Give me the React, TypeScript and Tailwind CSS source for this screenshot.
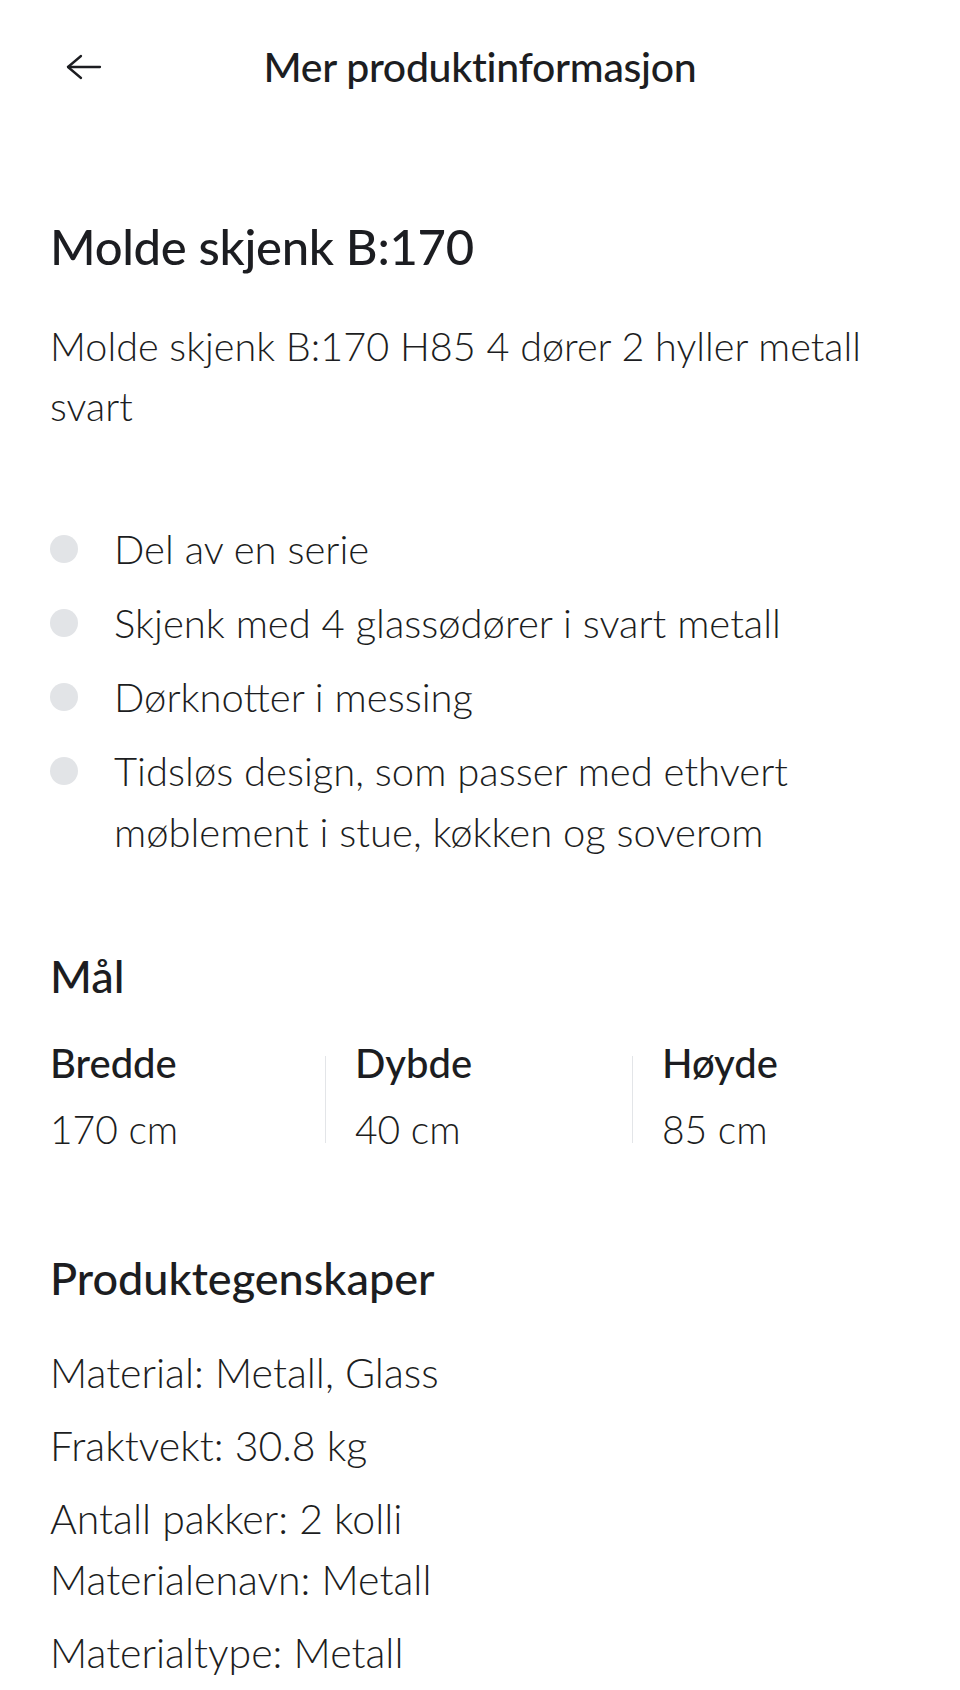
import React from 'react';

const bullets = [
  'Del av en serie',
  'Skjenk med 4 glassødører i svart metall',
  'Dørknotter i messing',
  'Tidsløs design, som passer med ethvert møblement i stue, køkken og soverom',
];

const dimensions = [
  { label: 'Bredde', value: '170 cm' },
  { label: 'Dybde', value: '40 cm' },
  { label: 'Høyde', value: '85 cm' },
];

const BackArrow: React.FC = () => (
  <svg width="36" height="26" viewBox="0 0 36 26" fill="none" stroke="currentColor" strokeWidth="2.3" strokeLinecap="round" strokeLinejoin="round">
    <path d="M34 13H2" />
    <path d="M15 2L2 13l13 11" />
  </svg>
);

const App: React.FC = () => {
  return (
    <div className="min-h-screen bg-white text-[#1c1d21] font-['Lato','Noto_Sans',sans-serif]">
      <header className="h-[134px] flex items-center px-[66px]">
        <button className="w-[36px] text-[#1c1d21]" aria-label="Tilbake">
          <BackArrow />
        </button>
        <h2 className="flex-1 text-center text-[41px] font-medium tracking-[-0.3px]">Mer produktinformasjon</h2>
        <div className="w-[36px]" />
      </header>

      <main className="px-[50px]">
        <h1 className="mt-[82px] text-[49px] leading-[60px] font-medium tracking-[-0.3px]">Molde skjenk B:170</h1>

        <p className="mt-[40px] text-[39.6px] leading-[60px] font-light">
          Molde skjenk B:170 H85 4 dører 2 hyller metall svart
        </p>

        <ul className="mt-[83px] flex flex-col gap-[13px]">
          {bullets.map((b) => (
            <li key={b} className="flex items-start">
              <span className="mt-[16px] w-[28px] h-[28px] rounded-full bg-[#e2e4e7] shrink-0" />
              <span className="ml-[36px] text-[40px] leading-[61px] font-light pr-[40px]">{b}</span>
            </li>
          ))}
        </ul>

        <h3 className="mt-[85px] text-[45px] leading-[56px] font-medium">Mål</h3>

        <div className="mt-[34px] flex items-start">
          {dimensions.map((d, i) => (
            <React.Fragment key={d.label}>
              {i > 0 && <div className="w-px h-[87px] mt-[18px] bg-[#e3e5e8] mr-[29px] shrink-0" />}
              <div className={i === 0 ? 'w-[275px]' : i === 1 ? 'w-[277px]' : 'flex-1'}>
                <div className="text-[40px] leading-[50px] font-medium">{d.label}</div>
                <div className="mt-[16px] text-[39px] leading-[50px] font-light">{d.value}</div>
              </div>
            </React.Fragment>
          ))}
        </div>

        <h3 className="mt-[96px] text-[45px] leading-[56px] font-medium">Produktegenskaper</h3>

        <div className="mt-[36px] text-[41px] leading-[61px] font-light">
          <p>Material: Metall, Glass</p>
          <p className="mt-[12px]">Fraktvekt: 30.8 kg</p>
          <p className="mt-[12px]">
            Antall pakker: 2 kolli
            <br />
            Materialenavn: Metall
          </p>
          <p className="mt-[12px]">Materialtype: Metall</p>
        </div>
      </main>
    </div>
  );
};

export default App;
